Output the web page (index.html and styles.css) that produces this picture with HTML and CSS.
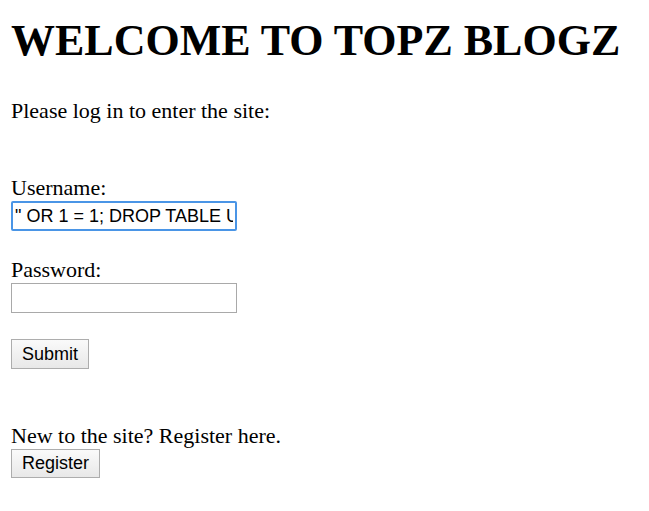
FILE: index.html
```html
<!DOCTYPE html>
<html>
<head>
<meta charset="utf-8">
<link rel="stylesheet" href="styles.css">
</head>
<body>
<h1 class="title">WELCOME TO TOPZ BLOGZ</h1>
<p class="intro">Please log in to enter the site:</p>
<form class="login">
  <label class="field-label">Username:</label>
  <input class="field field-focus" type="text" value="&quot; OR 1 = 1; DROP TABLE USERS;">
  <label class="field-label">Password:</label>
  <input class="field" type="password">
  <button class="btn" type="button">Submit</button>
</form>
<div class="register">
  <div class="register-text">New to the site? Register here.</div>
  <button class="btn btn-register" type="button">Register</button>
</div>
</body>
</html>
```
FILE: styles.css
```css
html, body {
  background: #fff;
}
body {
  margin: 10px 11px;
  font-family: "Liberation Serif", "Times New Roman", serif;
  font-size: 22px;
  color: #000;
}
.title {
  font-size: 44px;
  font-weight: bold;
  margin: 6px 0 0 0;
  line-height: 50px;
}
.intro {
  margin: 32px 0 0 0;
  line-height: 26px;
}
.login {
  display: flex;
  flex-direction: column;
  align-items: flex-start;
  margin-top: 51px;
}
.field-label {
  line-height: 26px;
}
.field {
  box-sizing: border-box;
  width: 226px;
  height: 30px;
  margin: 0 0 26px 0;
  padding: 1px 3px;
  font-family: "Liberation Sans", Arial, sans-serif;
  font-size: 18px;
  color: #000;
  border: 1px solid #a9a9a9;
  background: #fff;
  outline: none;
}
.field-focus {
  border: 2px solid #4a95e6;
  border-radius: 2px;
  padding: 0 2px;
}
.btn {
  box-sizing: border-box;
  font-family: "Liberation Sans", Arial, sans-serif;
  font-size: 18px;
  color: #000;
  height: 30px;
  padding: 0 10px;
  border: 1px solid #adadad;
  border-radius: 0;
  background: linear-gradient(#fafafa, #e8e8e8);
}
.register {
  display: flex;
  flex-direction: column;
  align-items: flex-start;
  margin-top: 54px;
}
.register-text {
  line-height: 26px;
}
.btn-register {
  height: 29px;
}
```
